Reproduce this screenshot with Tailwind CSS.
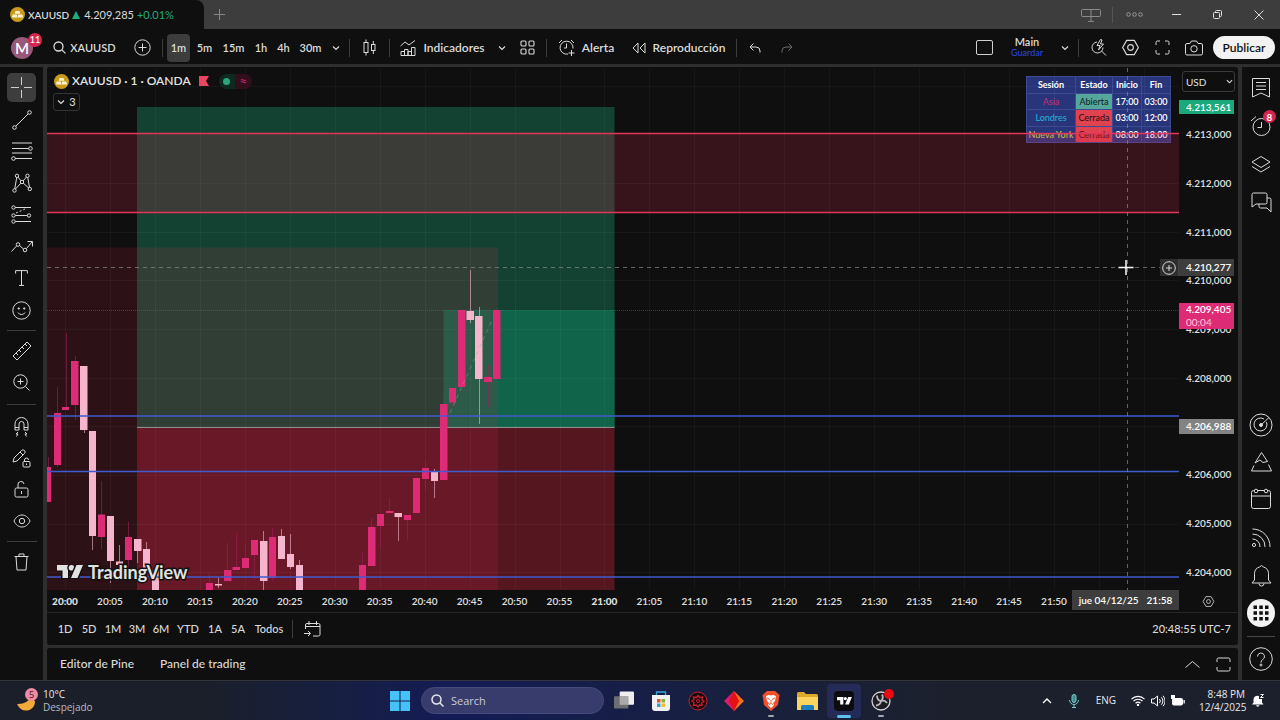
<!DOCTYPE html>
<html lang="es">
<head>
<meta charset="utf-8">
<meta name="viewport" content="width=device-width, initial-scale=1">
<title>XAUUSD 4.209,285</title>
<script src="https://cdn.jsdelivr.net/npm/@tailwindcss/browser@4"></script>
</head>
<body class="flex h-screen flex-col overflow-hidden bg-[#0f0f0f] font-['Lato','Liberation_Sans',sans-serif] text-[12px] leading-4 text-[#dbdbdb]">

<svg class="hidden" aria-hidden="true">
  <symbol id="gold" viewBox="0 0 16 16"><circle cx="8" cy="8" r="8" fill="#c99a1b"/><path d="M5.9 4.3h4.2l1 2.9H4.9zM2.9 8h4.4l.6 3.2H2zM8.7 8h4.4l.9 3.2H8.1z" fill="#fff3cf"/></symbol>
  <symbol id="chev" viewBox="0 0 8 8"><path d="M1 2.5l3 3 3-3" fill="none" stroke="currentColor" stroke-width="1.2"/></symbol>
  <symbol id="hex" viewBox="0 0 20 20"><path d="M6 2.5h8l4.3 7.5-4.3 7.5H6L1.700 10z" fill="none" stroke="currentColor" stroke-width="1.2" stroke-linejoin="round"/><circle cx="10" cy="10" r="3" fill="none" stroke="currentColor" stroke-width="1.2"/></symbol>
  <symbol id="tv" viewBox="0 0 26 14"><path d="M0 0h11v13H5.500V5.500H0z"/><circle cx="14.500" cy="2.800" r="2.800"/><path d="M19.500 0H26l-5.500 13H14z"/></symbol>
</svg>

<!-- Window title bar -->
<header class="flex h-[29px] shrink-0 items-center bg-[#3d3d3d]">
  <div class="flex h-full w-[204px] items-center rounded-tr-lg bg-[#0f0f0f] pl-[10px] text-[11px] font-semibold">
    <svg class="mr-[3px] size-[15px]"><use href="#gold"/></svg>
    <span class="text-[10px]">XAUUSD</span>
    <svg class="mr-1 ml-[3px] size-[8px]" viewBox="0 0 8 8"><path d="M4 0l4 8H0z" fill="#22ab7f"/></svg>
    <span class="font-normal">4.209,285</span>
    <span class="ml-[3px] font-normal text-[#22ab7f]">+0.01%</span>
  </div>
  <button aria-label="Nueva pestaña" class="flex w-[30px] justify-center text-[#888]"><svg class="size-[11px]" viewBox="0 0 11 11" stroke="currentColor"><path d="M5.500 0v11M0 5.500h11"/></svg></button>
  <div class="ml-auto flex h-full items-center text-[#b5b5b5]">
    <button aria-label="Panel" class="flex w-[42px] justify-center"><svg class="h-[14px] w-[20px]" viewBox="0 0 20 14" fill="none" stroke="#8c8c8c"><rect x=".5" y="1.500" width="19" height="7" rx="1"/><path d="M10 1.500v11.500M7 13.400h6"/></svg></button>
    <span class="h-4 w-px bg-[#555]"></span>
    <button aria-label="Más" class="flex w-[42px] justify-center"><svg class="h-[5px] w-[17px]" viewBox="0 0 17 5" fill="none" stroke="#999"><circle cx="2.500" cy="2.500" r="1.800"/><circle cx="8.500" cy="2.500" r="1.800"/><circle cx="14.500" cy="2.500" r="1.800"/></svg></button>
    <button aria-label="Minimizar" class="flex w-[42px] justify-center"><span class="h-px w-[9px] bg-[#ddd]"></span></button>
    <button aria-label="Restaurar" class="flex w-[41px] justify-center"><svg class="size-[9px]" viewBox="0 0 9 9" fill="none" stroke="#ddd"><rect x=".5" y="2.500" width="6" height="6" rx="1"/><path d="M2.500 2V1.500a1 1 0 0 1 1-1h4a1 1 0 0 1 1 1v4a1 1 0 0 1-1 1H7"/></svg></button>
    <button aria-label="Cerrar" class="flex w-[42px] justify-center"><svg class="size-[10px]" viewBox="0 0 10 10" stroke="#ddd"><path d="M.5.5l9 9M9.500.5l-9 9"/></svg></button>
  </div>
</header>

<!-- Main toolbar -->
<nav class="flex h-[38px] shrink-0 items-center border-b-[3px] border-[#2e2e2e] pt-[2px] font-semibold">
  <button aria-label="Cuenta" class="relative flex w-[47px] justify-start pl-[11px]">
    <span class="flex size-[22px] items-center justify-center rounded-full bg-[#97587a] text-[15px] text-white">M</span>
    <span class="absolute -top-1 left-[28px] flex size-[14px] items-center justify-center rounded-full bg-[#d6264f] text-[9px] text-white">11</span>
  </button>
  <button class="flex w-[75px] items-center justify-center gap-1 text-[11px]"><svg class="size-[13px]" viewBox="0 0 13 13" fill="none" stroke="currentColor" stroke-width="1.300"><circle cx="5.500" cy="5.500" r="4.500"/><path d="M8.900 8.900l3.500 3.500"/></svg>XAUUSD</button>
  <button aria-label="Comparar" class="flex w-10 justify-center"><svg class="size-[17px]" viewBox="0 0 17 17" fill="none" stroke="currentColor"><circle cx="8.500" cy="8.500" r="7.700"/><path d="M8.500 4.500v8M4.500 8.500h8"/></svg></button>
  <span class="h-[18px] w-px bg-[#3d3d3d]"></span>
  <button class="ml-1 h-[28px] w-[23px] rounded bg-[#3d3d3d] text-[11px]">1m</button>
  <button class="w-[29px] text-[11px]">5m</button>
  <button class="w-[29px] text-[11px]">15m</button>
  <button class="w-[26px] text-[11px]">1h</button>
  <button class="w-[19px] text-[11px]">4h</button>
  <button class="w-[35px] text-[11px]">30m</button>
  <button aria-label="Intervalos" class="flex w-4 justify-center"><svg class="size-2"><use href="#chev"/></svg></button>
  <span class="ml-[5px] h-[18px] w-px bg-[#3d3d3d]"></span>
  <button aria-label="Velas" class="flex w-[39px] justify-center"><svg class="h-[17px] w-[13px]" viewBox="0 0 13 17" fill="none" stroke="currentColor"><rect x="1" y="3.500" width="4" height="10"/><rect x="8.500" y="5.500" width="3.500" height="6"/><path d="M3 .5v3M3 13.500v3M10.300 2v3.500M10.300 11.500V15"/></svg></button>
  <span class="h-[18px] w-px bg-[#3d3d3d]"></span>
  <button class="flex w-[105px] items-center justify-center gap-[7px] whitespace-nowrap"><svg class="size-[16px]" viewBox="0 0 16 16" fill="none" stroke="currentColor"><path d="M.5 6l4.500-4 4 3L15 .5M1 15.500v-4h3.500v4zM4.500 15.500v-6H8v6zM8 15.500v-4h3.500M11.500 15.500v-8H15v8zM1 15.500h14"/></svg>Indicadores</button>
  <button aria-label="Favoritos" class="flex w-[14px] justify-center"><svg class="size-2"><use href="#chev"/></svg></button>
  <button aria-label="Plantillas" class="flex w-[37px] justify-center"><svg class="size-[15px]" viewBox="0 0 15 15" fill="none" stroke="currentColor" stroke-width="1.100"><rect x="1" y="1" width="5" height="5" rx="1"/><rect x="9" y="1" width="5" height="5" rx="1"/><rect x="1" y="9" width="5" height="5" rx="1"/><rect x="9" y="9" width="5" height="5" rx="1"/></svg></button>
  <span class="h-[18px] w-px bg-[#3d3d3d]"></span>
  <button class="flex w-[78px] items-center justify-center gap-[7px]"><svg class="size-[17px]" viewBox="0 0 17 17" fill="none" stroke="currentColor"><path d="M10 15a6.500 6.500 0 1 1 5-5.500M8.500 4.500V9H6M1 4l3-3M13 1l3 3M13.500 11v6M10.500 14h6"/></svg>Alerta</button>
  <button class="flex w-[107px] items-center justify-center gap-[7px]"><svg class="h-[12px] w-[14px]" viewBox="0 0 14 12" fill="none" stroke="currentColor" stroke-linejoin="round"><path d="M6 1v10L1 6zM13 1v10L8 6z"/></svg>Reproducción</button>
  <span class="ml-[4px] h-[18px] w-px bg-[#3d3d3d]"></span>
  <button aria-label="Deshacer" class="flex w-[36px] justify-center"><svg class="h-[10px] w-[12px]" viewBox="0 0 12 10" fill="none" stroke="currentColor"><path d="M4.500.5l-3.500 3.500 3.500 3.500M1 4h6a4 4 0 0 1 4 4v1.500"/></svg></button>
  <button aria-label="Rehacer" class="flex w-[27px] justify-center text-[#6a6a6a]"><svg class="h-[10px] w-[12px]" viewBox="0 0 12 10" fill="none" stroke="currentColor"><path d="M7.500.5L11 4 7.500 7.500M11 4H5a4 4 0 0 0-4 4v1.500"/></svg></button>
  <div class="ml-auto flex items-center">
    <button aria-label="Disposición" class="flex w-[30px] justify-center"><span class="h-[15px] w-[17px] rounded-xs border border-[#cfcfcf]"></span></button>
    <button class="flex w-[56px] flex-col items-center pb-[3px]"><span class="text-[11px] leading-[12px]">Main</span><span class="text-[9px] leading-[9px] font-normal text-[#2d49e8]">Guardar</span></button>
    <button aria-label="Diseños" class="flex w-[20px] justify-center"><svg class="size-2"><use href="#chev"/></svg></button>
    <span class="mx-[3px] h-[18px] w-px bg-[#3d3d3d]"></span>
    <button aria-label="Búsqueda rápida" class="flex w-8 justify-center"><svg class="size-[17px]" viewBox="0 0 17 17" fill="none" stroke="currentColor"><path d="M7 3a5.500 5.500 0 1 0 6 5.500M11.500 12l4.500 4.500M10.500.5L7 6.500h3L8.500 11l5-6h-3l1.500-4z"/></svg></button>
    <button aria-label="Configuración" class="flex w-8 justify-center"><svg class="size-[19px]"><use href="#hex"/></svg></button>
    <button aria-label="Pantalla completa" class="flex w-8 justify-center"><svg class="size-[15px]" viewBox="0 0 15 15" fill="none" stroke="currentColor"><path d="M1 5V2.500A1.500 1.500 0 0 1 2.500 1H5M10 1h2.500A1.500 1.500 0 0 1 14 2.500V5M14 10v2.500a1.500 1.500 0 0 1-1.500 1.500H10M5 14H2.500A1.500 1.500 0 0 1 1 12.500V10"/></svg></button>
    <button aria-label="Captura" class="flex w-8 justify-center"><svg class="h-[16px] w-[18px]" viewBox="0 0 18 16" fill="none" stroke="currentColor"><path d="M2 3.500h3L6.500 1h5L13 3.500h3A1.500 1.500 0 0 1 17.500 5v8.500A1.500 1.500 0 0 1 16 15H2A1.500 1.500 0 0 1 .5 13.500V5A1.500 1.500 0 0 1 2 3.500z"/><circle cx="9" cy="8.800" r="3.200"/></svg></button>
    <button class="mr-[5px] ml-[3px] h-[23px] w-[62px] rounded-full bg-[#f2f2f2] text-[12px] text-[#0f0f0f]">Publicar</button>
  </div>
</nav>

<main class="flex min-h-0 flex-1">
  <!-- Drawing tools -->
  <aside class="flex w-[43px] shrink-0 flex-col items-center pt-[5px]">
    <div class="grid h-[254px] w-full auto-rows-fr place-items-center">
      <button aria-label="Cruz" class="flex size-[29px] items-center justify-center rounded-[5px] bg-[#3d3d3d]"><svg class="size-[21px]" viewBox="0 0 21 21" stroke="#cfcfcf"><path d="M10.500 0v8M10.500 13v8M0 10.500h8M13 10.500h8"/></svg></button>
      <button aria-label="Línea"><svg class="size-[20px]" viewBox="0 0 20 20" fill="none" stroke="currentColor"><circle cx="2.500" cy="17.500" r="1.800"/><circle cx="17.500" cy="2.500" r="1.800"/><path d="M4 16L16 4"/></svg></button>
      <button aria-label="Fibonacci"><svg class="h-[20px] w-[22px]" viewBox="0 0 22 20" fill="none" stroke="currentColor"><path d="M1 2h20M1 7.500h17M1 12h20M4 17.500h17"/><circle cx="19.500" cy="7.500" r="1.800" fill="#0f0f0f"/><circle cx="2.500" cy="17.500" r="1.800" fill="#0f0f0f"/></svg></button>
      <button aria-label="Patrones"><svg class="size-[20px]" viewBox="0 0 20 20" fill="none" stroke="currentColor"><path d="M2.500 17L5 3l5 6 5.500-6L17.800 16 10 9z"/><g fill="#0f0f0f"><circle cx="2.500" cy="17.500" r="1.700"/><circle cx="5" cy="2.800" r="1.700"/><circle cx="10" cy="9" r="1.700"/><circle cx="15.500" cy="2.800" r="1.700"/><circle cx="17.800" cy="16" r="1.700"/></g></svg></button>
      <button aria-label="Predicción"><svg class="h-[19px] w-[21px]" viewBox="0 0 21 19" fill="none" stroke="currentColor"><path d="M4 2.500h16M4 10.500h13M4 16.500h16"/><path d="M5 8l11-5" stroke-dasharray="2 2"/><g fill="#0f0f0f"><circle cx="2.500" cy="2.500" r="1.700"/><circle cx="2.500" cy="10.500" r="1.700"/><circle cx="18" cy="10.500" r="1.700"/><circle cx="2.500" cy="16.500" r="1.700"/></g></svg></button>
      <button aria-label="Formas"><svg class="h-[14px] w-[22px]" viewBox="0 0 22 14" fill="none" stroke="currentColor"><path d="M.5 11.500L5.500 6M8.500 5.500l4 3.500M15.500 8.500L21 2M16.500 1.500h5v5"/><circle cx="7" cy="4.500" r="1.800"/><circle cx="14" cy="10" r="1.800"/></svg></button>
      <button aria-label="Texto"><svg class="h-[16px] w-[13px]" viewBox="0 0 13 16" fill="none" stroke="currentColor"><path d="M.6 3.500V.600h11.800v2.900M6.500.600v14.800M4 15.400h5"/></svg></button>
      <button aria-label="Emoji"><svg class="size-[19px]" viewBox="0 0 19 19" fill="none" stroke="currentColor"><circle cx="9.500" cy="9.500" r="8.700"/><path d="M6 11.500a4 4 0 0 0 7 0"/><circle cx="6.800" cy="7.500" r=".7" fill="currentColor"/><circle cx="12.200" cy="7.500" r=".7" fill="currentColor"/></svg></button>
    </div>
    <span class="my-1 h-px w-[29px] bg-[#3d3d3d]"></span>
    <div class="grid h-[63px] w-full auto-rows-fr place-items-center">
      <button aria-label="Medir"><svg class="size-[20px]" viewBox="0 0 20 20" fill="none" stroke="currentColor"><path d="M1 15L15 1l4 4L5 19zM4 12l2 2M7 9l2 2M10 6l2 2M13 3l2 2"/></svg></button>
      <button aria-label="Zoom"><svg class="size-[17px]" viewBox="0 0 17 17" fill="none" stroke="currentColor"><circle cx="7.500" cy="7.500" r="6.700"/><path d="M12.500 12.500l4 4M7.500 4.500v6M4.500 7.500h6"/></svg></button>
    </div>
    <span class="my-[6px] h-px w-[29px] bg-[#3d3d3d]"></span>
    <div class="grid h-[126px] w-full auto-rows-fr place-items-center">
      <button aria-label="Imán"><svg class="h-[20px] w-[15px]" viewBox="0 0 15 20" fill="none" stroke="currentColor"><path d="M1 13V7a6.500 6.500 0 0 1 13 0v6h-4V7a2.500 2.500 0 0 0-5 0v6zM1 10.500h4M10 10.500h4M4 15l-2 2h2l-1.500 2.500M11 15l2 2h-2l1.500 2.500"/></svg></button>
      <button aria-label="Modo dibujo"><svg class="size-[19px]" viewBox="0 0 19 19" fill="none" stroke="currentColor"><path d="M1 13l1-4L9.500 1.500a2 2 0 0 1 3 3L5 12zM8 3l3 3"/><rect x="11" y="12.500" width="7" height="5.500" rx="1"/><path d="M12.500 12.500v-1.500a2 2 0 0 1 4 0M14.500 14.500v1.500"/></svg></button>
      <button aria-label="Bloquear"><svg class="h-[17px] w-[15px]" viewBox="0 0 15 17" fill="none" stroke="currentColor"><rect x="1" y="7" width="13" height="9" rx="1.500"/><path d="M4 7V4a3 3 0 0 1 6-1M7.500 10v3" /></svg></button>
      <button aria-label="Ocultar"><svg class="h-[14px] w-[18px]" viewBox="0 0 18 14" fill="none" stroke="currentColor"><path d="M1 7c3.500-8 12.500-8 16 0-3.500 8-12.500 8-16 0z"/><circle cx="9" cy="7" r="2.700"/></svg></button>
    </div>
    <span class="my-1 h-px w-[30px] bg-[#3d3d3d]"></span>
    <button aria-label="Eliminar" class="flex h-8 items-center"><svg class="h-[18px] w-[15px]" viewBox="0 0 15 18" fill="none" stroke="currentColor"><path d="M.5 3.500h14M5 3.500V1h5v2.500M2 3.500L3 17h9l1-13.500"/></svg></button>
  </aside>

  <section class="flex min-w-0 flex-1 flex-col border-x-4 border-[#2e2e2e] bg-[#2e2e2e]">
    <div class="flex min-h-0 flex-1 flex-col rounded-[3px] bg-[#0f0f0f]">
      <div class="flex min-h-0 flex-1">
        <!-- Plot area -->
        <div class="relative mt-px min-w-0 flex-1 overflow-hidden">
          <table class="absolute top-[8px] right-[8px] border-collapse bg-[#28357a] text-center text-[9px] leading-[12px] font-semibold text-white">
            <thead><tr class="h-[17px]"><th class="w-[49px] border border-[#3c4a92]">Sesión</th><th class="w-[37px] border border-[#3c4a92]">Estado</th><th class="w-[29px] border border-[#3c4a92]">Inicio</th><th class="w-[29px] border border-[#3c4a92]">Fin</th></tr></thead>
            <tbody>
              <tr class="h-[16px]"><td class="border border-[#3c4a92] font-normal text-[#cc2f6e]">Asia</td><td class="border border-[#3c4a92] bg-[#55a79b] font-normal text-[#101a1a]">Abierta</td><td class="border border-[#3c4a92]">17:00</td><td class="border border-[#3c4a92]">03:00</td></tr>
              <tr class="h-[17px]"><td class="border border-[#3c4a92] font-normal text-[#23b5dd]">Londres</td><td class="border border-[#3c4a92] bg-[#e0424f] font-normal text-[#2b0d12]">Cerrada</td><td class="border border-[#3c4a92]">03:00</td><td class="border border-[#3c4a92]">12:00</td></tr>
              <tr class="h-[16px]"><td class="border border-[#3c4a92] font-normal whitespace-nowrap text-[#c8e04a]">Nueva York</td><td class="border border-[#3c4a92] bg-[#e0424f] font-normal text-[#5c0d18]">Cerrada</td><td class="border border-[#3c4a92]">08:00</td><td class="border border-[#3c4a92]">18:00</td></tr>
            </tbody>
          </table>
          <svg class="absolute inset-0 size-full" viewBox="47 68 1132 522" preserveAspectRatio="none" aria-label="Gráfico de velas XAUUSD">
            <rect x="137" y="107" width="477.500" height="321" fill="#144232"/>
            <rect x="137" y="428" width="477.500" height="162" fill="#551620"/>
            <rect x="443.500" y="310" width="171" height="118" fill="#10644a"/>
            <rect x="47" y="133.500" width="1133" height="79" fill="#d7284b" fill-opacity=".2"/>
            <rect x="47" y="247.500" width="451" height="343" fill="#d7284b" fill-opacity=".15"/>
            <path stroke="#fff" stroke-opacity=".035" d="M65.500 68v522M110.500 68v522M155.500 68v522M200.500 68v522M245.500 68v522M290.500 68v522M335.500 68v522M380.500 68v522M425.500 68v522M470.500 68v522M515.500 68v522M560.500 68v522M604.500 68v522M649.500 68v522M694.500 68v522M739.500 68v522M784.500 68v522M829.500 68v522M874.500 68v522M919.500 68v522M964.500 68v522M1009.500 68v522M1054.500 68v522M1099.500 68v522M1144.500 68v522M47 86.500h1133M47 183.500h1133M47 232.500h1133M47 280.500h1133M47 329.500h1133M47 378.500h1133M47 426.500h1133M47 475.500h1133M47 524.500h1133M47 572.500h1133"/>
            <path d="M137 427.500h477.500" stroke="#8d8f8e"/>
            <path d="M47 310.500h1133" stroke="#de2b76" stroke-opacity=".5" stroke-dasharray="1 1"/>
            <!-- wicks -->
            <path stroke="#a01c5a" stroke-opacity=".6" d="M48.500 457v10M57.500 387v80M66.500 333v74M75.500 356v64M101.500 481v68M128.500 522v48M209.500 573v10M227.500 543v27M236.500 533v34M245.500 545v13M254.500 555v25M272.500 528v53M362.500 553v12M371.500 518v9M380.500 525v23M389.500 498v13M407.500 520v20M425.500 462v28M443.500 398v6M452.500 402v5M488.500 365v42M497.500 307v108"/>
            <path stroke="#f5b5cc" stroke-opacity=".6" d="M84.500 430v3M92.500 536v14M110.500 561v22M119.500 545v17M137.500 551v12M146.500 542v8M218.500 578v10M263.500 531v59M281.500 529v7M290.500 534v35M299.500 560v6M398.500 517v24M434.500 469v29M470.500 270v53M479.500 307v117"/>
            <!-- rising bodies -->
            <path fill="#de2b76" d="M47 467h4v35h-4zM54 413h7v52h-7zM62 407h7v3h-7zM71 361h7.500v44H71zM98 514.500h7v22.500h-7zM125 537h7v23h-7zM206 583h7v7h-7zM224 570h7.500v11H224zM232.500 567h7.500v3h-7.500zM242 558h7v10h-7zM251 540h7v15h-7zM269 537h7v41h-7zM359 565h7v25h-7zM368 527h7.500v39H368zM377 514h7v12h-7zM386 511h7.500v2H386zM404 515h7v5h-7zM413 478h7v35h-7zM422 468h7v11h-7zM440 404h7.500v76H440zM449 388h7v14.500h-7zM458 310h7.500v77H458zM484 377h8v5h-8zM493 310h7.500v69H493z"/>
            <!-- falling bodies -->
            <path fill="#f5b5cc" d="M80 366h7.500v64H80zM89 431h7v105h-7zM107 516h7v45h-7zM116 561.500h7v3.500h-7zM134 539h7.500v12H134zM143 549h7v21h-7zM152 570h7v20h-7zM215 584h7v1.500h-7zM260 541h7.500v40H260zM278 536h7v23h-7zM287 554h7v13h-7zM296 565h7v25h-7zM394.500 513h7.500v4h-7.500zM431 472h7v9h-7zM466.500 311h7.500v9h-7.500zM475 316h7.500v63H475z"/>
            <path d="M450 413L493 318" stroke="#9aa39f" stroke-opacity=".45" stroke-dasharray="4 4"/>
            <path d="M47 416h1133M47 471.500h1133M47 577h1133" stroke="#405bd0" stroke-width="1.500"/>
            <path d="M47 133.500h1133M47 212.500h1133" stroke="#e0365a" stroke-width="1.300"/>
            <path d="M47 267.500h1115M1127.500 68v522" stroke="#8a8a8a" stroke-opacity=".7" stroke-dasharray="4 4"/>
            <path d="M1118.500 267.500h15M1126 260v15" stroke="#fff" stroke-width="1.500"/>
          </svg>
          <div class="absolute top-[5px] left-[7px] flex items-center text-[12px] font-semibold text-[#e4e4e4]">
            <svg class="mr-[3px] size-[15px]"><use href="#gold"/></svg>
            <span>XAUUSD · 1 · OANDA</span>
            <svg class="ml-[8px] size-[10px]" viewBox="0 0 10 10"><path d="M0 0h10L7 5l3 5H0z" fill="#ec4560"/></svg>
            <span class="ml-[10px] flex h-[15px] w-[16px] items-center justify-center rounded-l-full bg-[#10291f]"><span class="size-[7px] rounded-full bg-[#2ba67d]"></span></span>
            <span class="flex h-[15px] w-[17px] items-center justify-center rounded-r-full bg-[#300e1c] text-[13px] text-[#c21f5c]">≈</span>
          </div>
          <button class="absolute top-[25px] left-[6px] flex h-[18px] w-[27px] items-center justify-center gap-1 rounded-[3px] border border-[#343434] bg-[#0f0f0f] text-[11px] font-medium"><svg class="size-2"><use href="#chev"/></svg>3</button>
          <div class="absolute bottom-[8px] left-[10px] flex items-center gap-[5px] text-[18px] leading-5 font-bold text-[#e2e2e2]">
            <svg class="h-[14px] w-[26px] overflow-visible fill-[#e2e2e2] stroke-[#111] [paint-order:stroke]" stroke-width="3"><use href="#tv"/></svg>
            <span class="[-webkit-text-stroke:3px_#111] [paint-order:stroke]">TradingView</span>
          </div>
        </div>
        <!-- Price axis -->
        <div class="relative flex w-[59px] shrink-0 flex-col pt-1 pb-[10px] text-[10px] font-semibold text-[#e0e0e0]">
          <div class="relative ml-[3px] w-[53px]">
            <select aria-label="Moneda" class="h-[21px] w-full appearance-none rounded-[3px] border border-[#3a3a3a] bg-[#0f0f0f] pl-[3px] text-[10px] font-normal"><option>USD</option></select>
            <svg class="pointer-events-none absolute top-[7px] right-[2px] size-[7px]"><use href="#chev"/></svg>
          </div>
          <span class="mt-[8px] h-[14px] w-[55px] bg-[#1ba97b] pl-[7px] leading-[14px] text-white">4.213,561</span>
          <div class="mt-[12px] flex flex-1 flex-col justify-between">
            <span class="pl-[7px]">4.213,000</span><span class="pl-[7px]">4.212,000</span><span class="pl-[7px]">4.211,000</span><span class="pl-[7px]">4.210,000</span><span class="pl-[7px]">4.209,000</span><span class="pl-[7px]">4.208,000</span>
            <span class="h-[15px] w-[55px] bg-[#838383] pl-[7px] leading-[15px] text-white">4.206,988</span>
            <span class="pl-[7px]">4.206,000</span><span class="pl-[7px]">4.205,000</span><span class="pl-[7px]">4.204,000</span>
          </div>
          <span class="absolute top-[192px] left-0 h-[17px] w-[55px] bg-[#3d3d3d] pl-[7px] text-white">4.210,277</span>
          <button aria-label="Añadir" class="absolute top-[192px] -left-[19px] flex h-[17px] w-[19px] items-center justify-center border-r border-[#444] bg-[#2e2e2e]"><svg class="size-[14px]" viewBox="0 0 14 14" fill="none" stroke="#dcdcdc"><circle cx="7" cy="7" r="6.300"/><path d="M7 4v6M4 7h6"/></svg></button>
          <div class="absolute top-[236px] left-0 flex h-[26px] w-[55px] flex-col bg-[#de2b76] pl-[7px] leading-[13px] text-white"><span>4.209,405</span><span class="font-normal text-[#ffc4dc]">00:04</span></div>
        </div>
      </div>
      <!-- Time axis -->
      <div class="flex h-[23px] shrink-0 items-center border-b border-[#262626] text-center text-[10px] font-semibold text-[#e0e0e0]">
        <div class="flex flex-1 justify-between">
          <span class="w-9 font-black">20:00</span><span class="w-9">20:05</span><span class="w-9">20:10</span><span class="w-9">20:15</span><span class="w-9">20:20</span><span class="w-9">20:25</span><span class="w-9">20:30</span><span class="w-9">20:35</span><span class="w-9">20:40</span><span class="w-9">20:45</span><span class="w-9">20:50</span><span class="w-9">20:55</span><span class="w-9 font-black">21:00</span><span class="w-9">21:05</span><span class="w-9">21:10</span><span class="w-9">21:15</span><span class="w-9">21:20</span><span class="w-9">21:25</span><span class="w-9">21:30</span><span class="w-9">21:35</span><span class="w-9">21:40</span><span class="w-9">21:45</span><span class="w-9">21:50</span>
        </div>
        <span class="mb-[3px] flex h-5 w-[107px] items-center justify-center gap-2 bg-[#3d3d3d] text-white"><span>jue 04/12/25</span><span>21:58</span></span>
        <button aria-label="Ajustes de escala" class="flex w-[59px] justify-center"><svg class="size-[13px]"><use href="#hex"/></svg></button>
      </div>
      <!-- Date ranges -->
      <div class="flex h-[32px] shrink-0 items-center pl-[6px] text-[11px] font-medium">
        <button class="w-6">1D</button><button class="w-6">5D</button><button class="w-6">1M</button><button class="w-6">3M</button><button class="w-6">6M</button><button class="w-[30px]">YTD</button><button class="w-6">1A</button><button class="w-[22px]">5A</button><button class="w-10">Todos</button>
        <span class="ml-[3px] h-[18px] w-px bg-[#3d3d3d]"></span>
        <button aria-label="Ir a fecha" class="flex w-[39px] justify-center"><svg class="h-[16px] w-[17px]" viewBox="0 0 17 16" fill="none" stroke="currentColor"><path d="M1.500 8V4A1.500 1.500 0 0 1 3 2.500h11.500A1.500 1.500 0 0 1 16 4v9.500a1.500 1.500 0 0 1-1.500 1.500H9M1.500 5.500H16M5 0v4M12.500 0v4M0 12.500h6M4 10l2.500 2.500L4 15"/></svg></button>
        <button class="mr-[7px] ml-auto">20:48:55 UTC-7</button>
      </div>
    </div>
    <div class="mt-[3px] flex h-[32px] shrink-0 items-center rounded-t-[3px] bg-[#0f0f0f] pl-[13px] text-[12px] font-medium">
      <button>Editor de Pine</button>
      <button class="ml-[26px]">Panel de trading</button>
      <button aria-label="Expandir" class="ml-auto"><svg class="h-[7px] w-[15px]" viewBox="0 0 15 7" fill="none" stroke="currentColor"><path d="M.5 6.500l7-6 7 6"/></svg></button>
      <button aria-label="Maximizar" class="mr-[7px] ml-[16px]"><svg class="size-[15px]" viewBox="0 0 15 15" fill="none" stroke="currentColor"><path d="M1 5V2.500A1.500 1.500 0 0 1 2.500 1h10A1.500 1.500 0 0 1 14 2.500V5M14 10v2.500a1.500 1.500 0 0 1-1.500 1.500h-10A1.500 1.500 0 0 1 1 12.500V10"/></svg></button>
    </div>
  </section>

  <!-- Right rail -->
  <aside class="flex w-[38px] shrink-0 flex-col items-center pt-[2px]">
    <div class="grid h-[153px] w-full auto-rows-fr place-items-center">
      <button aria-label="Lista"><svg class="h-[20px] w-[18px]" viewBox="0 0 18 20" fill="none" stroke="currentColor"><path d="M.5.5h17v18.500L9 15 .5 19zM4 4.500h10M4 8h10M4 11.500h10"/></svg></button>
      <button aria-label="Alertas" class="relative"><svg class="size-[20px]" viewBox="0 0 20 20" fill="none" stroke="currentColor"><circle cx="10.500" cy="11" r="8.500"/><path d="M10.500 6v5.500H6.500M0 5l5-4.500"/></svg><span class="absolute -top-[6px] -right-[5px] flex size-[13px] items-center justify-center rounded-full bg-[#d6264f] text-[10px] font-bold text-white">8</span></button>
      <button aria-label="Objetos"><svg class="h-[17px] w-[20px]" viewBox="0 0 20 17" fill="none" stroke="currentColor" stroke-linejoin="round"><path d="M10 .5l9 5.500-9 5.500L1 6zM1 10.500l9 5.500 9-5.500"/></svg></button>
      <button aria-label="Chats"><svg class="size-[21px]" viewBox="0 0 21 21" fill="none" stroke="currentColor"><path d="M1 15V2.500A1.500 1.500 0 0 1 2.500 1h12A1.500 1.500 0 0 1 16 2.500v8a1.500 1.500 0 0 1-1.500 1.500H5zM16 6h2.500A1.500 1.500 0 0 1 20 7.500V20l-4-4H9.500A1.500 1.500 0 0 1 8 14.500V12"/></svg></button>
    </div>
    <div class="mt-auto grid h-[226px] w-full auto-rows-fr place-items-center">
      <button aria-label="Screener"><svg class="size-[24px]" viewBox="0 0 24 24" fill="none" stroke="currentColor"><circle cx="12" cy="12" r="11"/><path d="M17.500 9a6.500 6.500 0 1 1-2.500-3M12 12l8-7.500"/><circle cx="12" cy="12" r="1.500" fill="currentColor"/></svg></button>
      <button aria-label="Pine"><svg class="h-[20px] w-[21px]" viewBox="0 0 21 20" fill="none" stroke="currentColor"><path d="M10.500.5l6 9-4.500 1-3-2.500L4 11zM3 13.500L.5 19h20L17.500 12.500"/></svg></button>
      <button aria-label="Calendario" class="pb-1"><svg class="h-[21px] w-[20px]" viewBox="0 0 20 21" fill="none" stroke="currentColor"><rect x=".5" y="2.500" width="19" height="18" rx="2"/><path d="M.5 8h19"/><g fill="#0f0f0f"><circle cx="5" cy="3" r="1.800"/><circle cx="15" cy="3" r="1.800"/></g></svg></button>
      <button aria-label="Noticias"><svg class="size-[20px]" viewBox="0 0 20 20" fill="none" stroke="currentColor"><circle cx="3" cy="17" r="1.600"/><path d="M1.500 11a7.500 7.500 0 0 1 7.500 8M1.500 6a12.500 12.500 0 0 1 12.500 13M1.500 1A17.500 17.500 0 0 1 19 19"/></svg></button>
      <button aria-label="Notificaciones"><svg class="h-[23px] w-[21px]" viewBox="0 0 21 23" fill="none" stroke="currentColor"><path d="M3.500 16V9.500a7 7 0 0 1 5-6.500q2-3 4 0a7 7 0 0 1 5 6.500V16l2.500 3H1zM8 19.500a2.500 2.500 0 0 0 5 0"/></svg></button>
      <button aria-label="Aplicaciones" class="flex size-[28px] items-center justify-center rounded-full bg-[#f2f2f2]"><svg class="size-[16px]" viewBox="0 0 16 16" fill="#0f0f0f"><path d="M.5.500h3.500v3.500H.5zM6.300.500h3.500v3.500H6.300zM12 .500h3.500v3.500H12zM.5 6.300h3.500v3.500H.5zM6.300 6.300h3.500v3.500H6.300zM12 6.300h3.500v3.500H12zM.5 12h3.500v3.500H.5zM6.300 12h3.500v3.500H6.300zM12 12h3.500v3.500H12z"/></svg></button>
    </div>
    <span class="mt-1 h-px w-[28px] bg-[#4a4a4a]"></span>
    <button aria-label="Ayuda" class="flex h-[43px] items-center"><svg class="size-[24px]" viewBox="0 0 24 24" fill="none" stroke="currentColor"><circle cx="12" cy="12" r="11.300"/><path d="M8.500 9.500a3.500 3.500 0 1 1 5 3.200q-1.500.8-1.500 2.800"/><circle cx="12" cy="18" r="1"/></svg></button>
  </aside>
</main>

<!-- Windows taskbar -->
<footer class="flex h-10 shrink-0 items-center border-t border-[#35363c] bg-linear-to-r from-[#1b1f2a] from-16% via-[#141b55] via-35% to-[#1c202d] to-74% font-['Open_Sans','Noto_Sans',sans-serif] text-[10px] leading-[13px] text-[#e8e8ec]">
  <button class="flex w-[381px] items-center pl-[17px] text-left">
    <span class="relative mr-[5px] h-[26px] w-[21px]">
      <svg class="absolute bottom-[3px] left-0 h-[15px] w-[19px]" viewBox="0 0 19 15"><path d="M14 0Q11 8 1 8c-.5 0-1 .5-.5 1C3 13 6 15 10 14.500c5-.5 8-4.500 8-9z" fill="#f3a93c"/></svg>
      <span class="absolute top-0 right-0 flex size-[13px] items-center justify-center rounded-full bg-[#ee8ba0] text-[9px] text-[#471420]">5</span>
    </span>
    <span>10°C<br><span class="text-[#b9bbc4]">Despejado</span></span>
  </button>
  <button aria-label="Inicio" class="flex w-[37px] justify-center"><svg class="size-[20px]" viewBox="0 0 20 20" fill="#45c2f7"><path d="M0 0h9.500v9.500H0zM10.500 0H20v9.500h-9.500zM0 10.500h9.500V20H0zM10.500 10.500H20V20h-9.500z"/></svg></button>
  <label class="ml-[3px] flex h-[27px] w-[183px] items-center rounded-full border border-[#454a80] bg-[#373c6c] pl-[9px]">
    <svg class="mr-[7px] size-[13px] shrink-0" viewBox="0 0 13 13" fill="none" stroke="#e8e8ec" stroke-width="1.500"><circle cx="5.500" cy="5.500" r="4.500"/><path d="M9 9l3.500 3.500"/></svg>
    <input aria-label="Search" placeholder="Search" class="w-full bg-transparent text-[11px] placeholder:text-[#c9cbdd]">
  </label>
  <div class="ml-[2px] grid h-full w-[293px] grid-cols-8 place-items-center">
    <button aria-label="Vista de tareas"><svg class="h-[19px] w-[20px]" viewBox="0 0 21 19"><rect x="6" width="15" height="14" rx="1" fill="#eee"/><rect y="5" width="15" height="13" rx="1" fill="#777" fill-opacity=".9"/><path d="M6 5h9v9H6z" fill="#aaa"/></svg></button>
    <button aria-label="Store"><svg class="size-[20px]" viewBox="0 0 20 20"><path d="M5.500 5V1h9v4" fill="none" stroke="#35a8e0" stroke-width="1.300"/><path d="M1 4h18v13a3 3 0 0 1-3 3H4a3 3 0 0 1-3-3z" fill="#f1f1f1"/><path d="M6 8h3.500v3.500H6z" fill="#e8512f"/><path d="M10.500 8H14v3.500h-3.500z" fill="#7fba2c"/><path d="M6 12.500h3.500V16H6z" fill="#2d9fe0"/><path d="M10.500 12.500H14V16h-3.500z" fill="#f7b928"/></svg></button>
    <button aria-label="Seguridad"><svg class="size-[20px]" viewBox="0 0 20 20" fill="#19090c" stroke="#c6202f"><circle cx="10" cy="10" r="9"/><path d="M10 4.500l1.500 2 3-.5-.5 3 2 1.500-2.500 1.500.5 2.500-2.500-.5L10 16l-1.500-2-3 .5.500-3L4 10l2-1.500-.5-2.500 3 .5z" stroke-width="1.300"/><circle cx="10" cy="10" r="1.500"/></svg></button>
    <button aria-label="Diamante"><svg class="size-[20px]" viewBox="0 0 20 20"><path d="M10 0v20L0 10z" fill="#d51e6d"/><path d="M10 0l10 10-10 10z" fill="#f7721f"/><path d="M10 0l5 10-5 10-5-10z" fill="#e80f17"/></svg></button>
    <button aria-label="Brave" class="relative"><svg class="h-[20px] w-[18px]" viewBox="0 0 18 20"><path d="M5 0h8l4.500 4-1.500 10-7 6-7-6L.5 4z" fill="#f0502a"/><path d="M4 5l3-1 2 .5L11 4l3 1-1 5-2 2 1 2-3 3-3-3 1-2-2-2z" fill="#fff"/><path d="M5 7l3 1.500M13 7l-3 1.500M9 9v3M7 13.500l2-1 2 1" stroke="#f0502a" fill="none"/></svg><span class="absolute -bottom-[6px] left-[6px] h-[2px] w-[6px] rounded bg-[#a4a6b4]"></span></button>
    <button aria-label="Explorador"><svg class="h-[18px] w-[21px]" viewBox="0 0 21 18"><path d="M0 1.500A1.500 1.500 0 0 1 1.500 0H7l2 2h10.500A1.500 1.500 0 0 1 21 3.500V18H0z" fill="#e0a82a"/><path d="M0 5h21v13H0z" fill="#fbd45f"/><path d="M4 18v-3.500A1.500 1.500 0 0 1 5.500 13h10a1.500 1.500 0 0 1 1.500 1.500V18z" fill="#1c7fc4"/></svg></button>
    <button aria-label="TradingView" class="relative flex size-[34px] items-center justify-center rounded bg-[#252b57]"><span class="flex size-[20px] items-center justify-center rounded bg-[#0c0c0e]"><svg class="h-[8px] w-[15px]" fill="#fff"><use href="#tv"/></svg></span><span class="absolute bottom-0 left-[10px] h-[3px] w-[14px] rounded bg-[#5cc0ee]"></span></button>
    <button aria-label="OBS" class="relative"><svg class="size-[20px]" viewBox="0 0 20 20" fill="none"><circle cx="10" cy="10" r="9" fill="#1d1c22" stroke="#d4d4d8" stroke-width="1.300"/><path d="M6 4.500q0 5 4 5.500 4-1.500 6 2M10 10q-.5 4-5 4.500M10 10q3-3 1-6.500" stroke="#b9b9be" stroke-width="1.800"/></svg><span class="absolute -top-[2px] -right-[3px] size-[10px] rounded-full bg-[#e90a12]"></span><span class="absolute -bottom-[6px] left-[7px] h-[2px] w-[6px] rounded bg-[#a4a6b4]"></span></button>
  </div>
  <div class="mr-[16px] ml-auto flex items-center">
    <button aria-label="Iconos ocultos"><svg class="h-[6px] w-[10px]" viewBox="0 0 10 6" fill="none" stroke="#fff" stroke-width="1.400"><path d="M1 5l4-4 4 4"/></svg></button>
    <svg class="ml-[17px] h-[14px] w-[10px]" viewBox="0 0 10 14" fill="none" stroke="#79c8c9"><rect x="3" y=".5" width="4" height="8" rx="2" fill="#3f8c90"/><path d="M.5 6a4.500 4.500 0 0 0 9 0M5 10.500V13M3 13.500h4"/></svg>
    <button class="ml-[17px]">ENG</button>
    <button aria-label="Red, volumen y batería" class="ml-[15px] flex items-center gap-[6px]">
      <svg class="h-[11px] w-[14px]" viewBox="0 0 14 11" fill="none" stroke="#fff" stroke-width="1.200"><path d="M.5 4.200a9 9 0 0 1 13 0M2.500 6.200a6.200 6.200 0 0 1 9 0M4.600 8.200a3.500 3.500 0 0 1 4.800 0"/><circle cx="7" cy="10" r=".6" fill="#fff"/></svg>
      <svg class="h-[12px] w-[14px]" viewBox="0 0 14 12" fill="none" stroke="#fff"><path d="M.5 4v4H3l3.500 3V1L3 4zM8.500 4a3 3 0 0 1 0 4M10.300 2.300a5 5 0 0 1 0 7.400M12 .8a7.500 7.500 0 0 1 0 10.400"/></svg>
      <svg class="h-[11px] w-[14px]" viewBox="0 0 14 11" fill="#fff"><rect x="1" y="3" width="11" height="7.500" rx="2"/><rect x="12.500" y="5" width="1.300" height="3.500"/><path d="M0 0h4v4H0z"/></svg>
    </button>
    <button class="ml-[14px] w-[46px] text-right whitespace-nowrap"><span class="block">8:48 PM</span><span class="block">12/4/2025</span></button>
    <button aria-label="No molestar" class="ml-[7px]"><svg class="h-[13px] w-[12px]" viewBox="0 0 12 13" fill="#fff"><path d="M0 10.500l1.500-2V5.500A4 4 0 0 1 7 2v3h3v3.500l1.500 2zM4 11.300h3.500a1.800 1.800 0 0 1-3.500 0z"/><path d="M8.500.5h3L8.500 3.500h3" fill="none" stroke="#fff"/></svg></button>
  </div>
</footer>
</body>
</html>
